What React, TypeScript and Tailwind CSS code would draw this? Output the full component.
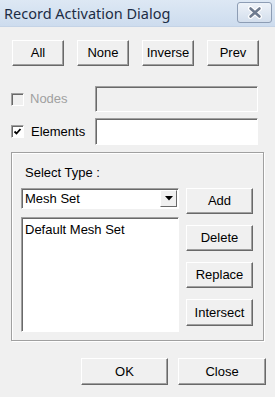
const font = "font-['Segoe_UI','Liberation_Sans',sans-serif]"

const raised =
  "border border-t-white border-l-white border-b-[#696969] border-r-[#696969] bg-[#f0f0f0] shadow-[inset_-1px_-1px_0_#a0a0a0] text-[13px] text-black flex items-center justify-center"

const sunken =
  "border border-t-[#a0a0a0] border-l-[#a0a0a0] border-b-white border-r-white shadow-[inset_1px_1px_0_#696969]"

function Btn({ label, className }: { label: string; className: string }) {
  return <div className={`${raised} ${className}`}>{label}</div>
}

function Check({ checked, disabled }: { checked?: boolean; disabled?: boolean }) {
  return (
    <div
      className={`w-[13px] h-[13px] flex items-center justify-center ${sunken} ${
        disabled ? "bg-[#f0f0f0]" : "bg-white"
      }`}
    >
      {checked && (
        <svg width="9" height="9" viewBox="0 0 9 9">
          <path d="M1.5 4.5 L3.5 6.5 L7.5 2" stroke="#000" strokeWidth="1.8" fill="none" />
        </svg>
      )}
    </div>
  )
}

export default function App() {
  return (
    <div className={`w-[275px] h-[397px] bg-[#f0f0f0] flex flex-col ${font}`}>
      {/* title bar */}
      <div className="h-[27px] flex justify-between bg-gradient-to-b from-[#dde8f4] to-[#cddcee] border-b border-[#c4d3e6]">
        <span className="pl-[4px] pt-[3px] font-['Noto_Sans',sans-serif] text-[14.5px] leading-[20px] text-[#1c2c44]">
          Record Activation Dialog
        </span>
        <div className="mt-[2px] mr-[3px] w-[35px] h-[21px] rounded-[3px] border border-[#8d9db4] bg-gradient-to-b from-[#eef3f9] to-[#d3deec] flex items-center justify-center">
          <svg width="16" height="13" viewBox="0 0 16 13">
            <path d="M3.5 2.5 L12.5 10.5 M12.5 2.5 L3.5 10.5" stroke="#ffffff" strokeWidth="5" strokeLinecap="round" />
            <path d="M3.5 2.5 L12.5 10.5 M12.5 2.5 L3.5 10.5" stroke="#6e7b8f" strokeWidth="2.6" strokeLinecap="round" />
          </svg>
        </div>
      </div>

      {/* top buttons */}
      <div className="mt-[13px] pl-[12px] flex gap-[13px]">
        <Btn label="All" className="w-[52px] h-[26px]" />
        <Btn label="None" className="w-[52px] h-[26px]" />
        <Btn label="Inverse" className="w-[52px] h-[26px]" />
        <Btn label="Prev" className="w-[52px] h-[26px]" />
      </div>

      {/* nodes */}
      <div className="mt-[20px] pl-[11px] flex items-center">
        <Check disabled />
        <span className="ml-[6px] w-[65px] text-[13px] text-[#a0a0a0]">Nodes</span>
        <div className={`w-[163px] h-[26px] bg-[#f0f0f0] ${sunken}`} />
      </div>

      {/* elements */}
      <div className="mt-[6px] pl-[11px] flex items-center">
        <Check checked />
        <span className="ml-[7px] w-[64px] text-[13px] text-black">Elements</span>
        <div className={`w-[163px] h-[27px] bg-white ${sunken}`} />
      </div>

      {/* group box */}
      <div className="mt-[7px] ml-[11px] w-[253px] h-[189px] border border-[#a0a0a0] shadow-[inset_1px_1px_0_#fff,1px_1px_0_#fff] px-[9px]">
        <div className="mt-[12px] ml-[4px] text-[13px] text-black leading-[16px]">Select Type :</div>
        <div className="mt-[7px] flex gap-[7px]">
          <div className="flex flex-col gap-[8px]">
            <div className={`w-[158px] h-[21px] bg-white ${sunken} flex items-center`}>
              <span className="flex-1 pl-[3px] text-[13px] text-black">Mesh Set</span>
              <div className="w-[17px] h-[17px] mr-[1px] border border-t-white border-l-white border-b-[#696969] border-r-[#696969] bg-[#f0f0f0] flex items-center justify-center">
                <svg width="8" height="5" viewBox="0 0 8 5">
                  <path d="M0 0 H8 L4 4.5 Z" fill="#000" />
                </svg>
              </div>
            </div>
            <div className={`w-[158px] h-[115px] bg-white ${sunken} pl-[3px] pt-[2px] text-[13px] text-black`}>
              Default Mesh Set
            </div>
          </div>
          <div className="flex flex-col gap-[11px]">
            <Btn label="Add" className="w-[67px] h-[26px]" />
            <Btn label="Delete" className="w-[67px] h-[26px]" />
            <Btn label="Replace" className="w-[67px] h-[26px]" />
            <Btn label="Intersect" className="w-[67px] h-[27px]" />
          </div>
        </div>
      </div>

      {/* footer */}
      <div className="mt-[17px] pl-[81px] flex gap-[10px]">
        <Btn label="OK" className="w-[87px] h-[27px]" />
        <Btn label="Close" className="w-[88px] h-[27px]" />
      </div>
    </div>
  )
}
